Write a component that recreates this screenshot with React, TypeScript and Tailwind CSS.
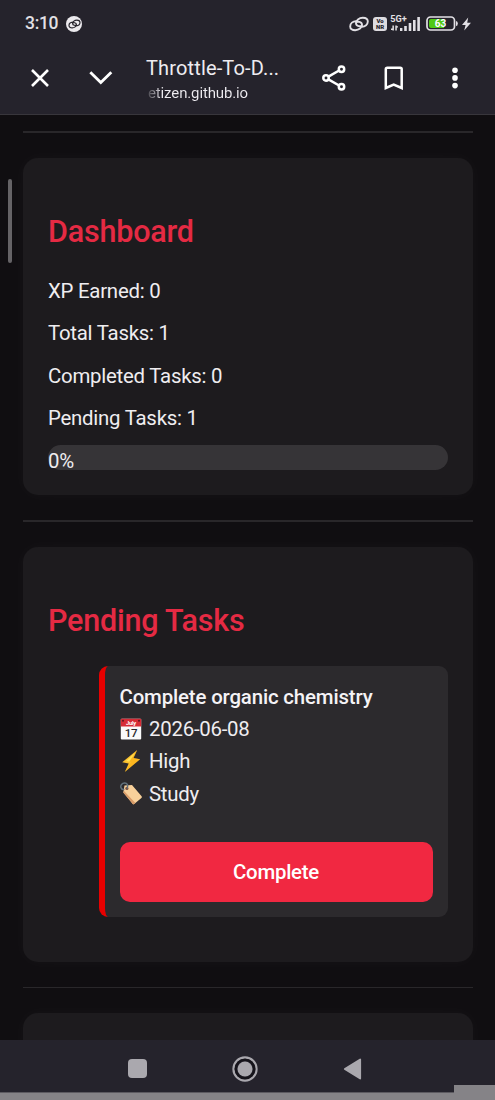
import type { ReactNode } from "react";

const stats = [
  { label: "XP Earned", value: 0 },
  { label: "Total Tasks", value: 1 },
  { label: "Completed Tasks", value: 0 },
  { label: "Pending Tasks", value: 1 }
];

const progress = 0;

function LinkRings({ className }: { className: string }) {
  return (
    <svg viewBox="0 0 20 16" className={className} fill="none" stroke="currentColor" strokeWidth="1.9">
      <path d="M13.6 9.6C11.6 10.8 7.2 10.4 7 7.4C6.8 4.2 10.2 1.8 13.8 1.8C16.8 1.8 18.8 3.2 18.8 5.6C18.8 8.4 16.2 10.6 12.8 10.9" />
      <path d="M6.4 6.4C8.4 5.2 12.8 5.6 13 8.6C13.2 11.8 9.8 14.2 6.2 14.2C3.2 14.2 1.2 12.8 1.2 10.4C1.2 7.6 3.8 5.4 7.2 5.1" />
    </svg>
  );
}

function StatusBar() {
  return (
    <div className="flex h-[46px] items-center pl-[25px] pr-[24px] pt-[1px] text-[#e2e0e5]">
      <span className="w-[34px] whitespace-nowrap text-[17.5px] font-medium leading-none tracking-[-0.3px]">3:10</span>
      <span className="ml-[7px] flex size-4 items-center justify-center rounded-full bg-[#eceaee] text-[#25232b]">
        <LinkRings className="h-[10px] w-[13px]" />
      </span>
      <span className="flex-1" />
      <LinkRings className="h-4 w-5" />
      <span className="ml-[4px] flex h-[14px] w-[14px] flex-col items-center justify-center rounded-[3px] bg-[#dddbe0] text-[6px] font-black leading-[6px] text-[#25232b]">
        <span>Vo</span>
        <span>NR</span>
      </span>
      <svg viewBox="0 0 31 19" className="-mt-[2px] ml-[3px] h-[19px] w-[31px] overflow-visible" fill="currentColor">
        <text x="0.2" y="9.4" fontSize="9" fontWeight="700" textLength="16.5" lengthAdjust="spacingAndGlyphs" fontFamily="Roboto">5G+</text>
        <path d="M2.4 12.5h1.5v5H2.4zM1 15.6h2v1.3H1zM5.3 12.5h1.5v5H5.3zM6 13.2h2v1.3H6z" />
        <rect x="10" y="15" width="2.4" height="3" />
        <rect x="14.2" y="13" width="2.6" height="5" />
        <rect x="18.7" y="10" width="2.6" height="8" />
        <rect x="23" y="7" width="2.6" height="11" />
        <rect x="27.3" y="4" width="2.6" height="14" />
      </svg>
      <svg viewBox="0 0 32 15" className="ml-[5px] h-[15px] w-8">
        <rect x="1" y="1" width="27.5" height="13" rx="3.5" fill="none" stroke="currentColor" strokeWidth="1.7" />
        <path d="M5 3h13v9H5a2 2 0 0 1-2-2V5a2 2 0 0 1 2-2Z" fill="#4fc914" />
        <path d="M30 5q1.8 0 1.8 2.5T30 10Z" fill="currentColor" />
        <text x="14.5" y="11.2" fontSize="10" fontWeight="700" textAnchor="middle" fill="#fff" fontFamily="Roboto">63</text>
      </svg>
      <svg viewBox="0 0 9 14" className="ml-[4px] h-[14px] w-[9px]" fill="currentColor">
        <path d="M6.2.4 0 8h3.6L2.2 13.6 9 5.8H5.2Z" />
      </svg>
    </div>
  );
}

function BrowserBar() {
  return (
    <div className="flex h-[68px] items-center pl-[31px] pr-[36px] pb-[4px] text-white">
      <svg viewBox="0 0 18 18" className="size-[18px]" fill="none" stroke="currentColor" strokeWidth="2.6">
        <path d="m1 1 16 16M17 1 1 17" />
      </svg>
      <svg viewBox="0 0 24 14" className="ml-[40px] h-[14px] w-6" fill="none" stroke="currentColor" strokeWidth="2.8">
        <path d="m1.3 1.2 10.5 10.4L22.3 1.2" />
      </svg>
      <div className="ml-[33px] w-[134px] whitespace-nowrap pt-[3px]">
        <div className="text-[20px] leading-[26px] tracking-[0.15px] text-[#eeecf1]">Throttle-To-D...</div>
        <div className="bg-linear-to-r from-[#35333b] to-[#eeecf1] to-[16px] bg-clip-text pl-[2px] text-[15px] leading-[24px] tracking-[-0.13px] text-transparent">
          etizen.github.io
        </div>
      </div>
      <svg viewBox="0 0 24 26" className="ml-[42px] h-[26px] w-6" fill="none" stroke="currentColor" strokeWidth="2.5">
        <circle cx="4" cy="13" r="2.7" />
        <circle cx="19.5" cy="4.2" r="2.7" />
        <circle cx="19.5" cy="21.8" r="2.7" />
        <path d="m6.4 11.7 10.7-6.2M6.4 14.3l10.7 6.2" />
      </svg>
      <svg viewBox="0 0 20 24" className="ml-[38px] h-6 w-5" fill="none" stroke="currentColor" strokeWidth="2.5">
        <path d="M1.8 22V3.2q0-1.5 1.5-1.5h12.9q1.5 0 1.5 1.5V22l-8-3.5Z" />
      </svg>
      <svg viewBox="0 0 6 22" className="ml-[47.5px] h-[22px] w-[6px]" fill="currentColor">
        <circle cx="3" cy="3.2" r="2.8" />
        <circle cx="3" cy="10.9" r="2.8" />
        <circle cx="3" cy="18.6" r="2.8" />
      </svg>
    </div>
  );
}

function Card({ title, className, children }: { title?: string; className: string; children?: ReactNode }) {
  return (
    <section
      className={`rounded-[15px] bg-[#1d1b1e] px-[25px] shadow-[0_0_15px_rgba(255,255,255,0.03)] ${className}`}
    >
      {title && (
        <h2 className="pt-[56px] text-[30.5px] font-medium leading-[36px] tracking-[-0.2px] text-[#e52a43]">{title}</h2>
      )}
      {children}
    </section>
  );
}

function Divider() {
  return <div className="my-[25px] h-[1.5px] shrink-0 bg-[#29272a]" />;
}

function CalendarIcon() {
  return (
    <svg viewBox="0 0 22 22" className="size-[22px]">
      <rect x=".8" y=".8" width="20.4" height="20.6" rx="1" fill="#fafafa" />
      <path d="M.8 1.5q0-.7.7-.7h19q.7 0 .7.7v7H.8Z" fill="#d72c36" />
      <circle cx="3" cy="2.8" r="1" fill="#5d1820" />
      <circle cx="19" cy="2.8" r="1" fill="#5d1820" />
      <text x="11" y="6.6" fontSize="5.8" fontWeight="700" textAnchor="middle" fill="#fff" fontFamily="Roboto">July</text>
      <text x="11" y="18.8" fontSize="11.5" fontWeight="500" textAnchor="middle" fill="#29292d" fontFamily="Roboto">17</text>
    </svg>
  );
}

function BoltIcon() {
  return (
    <svg viewBox="0 0 22 24" className="h-6 w-[22px]">
      <path d="M17.2 1 2.2 13.2l6.5 1.2L4.8 23l15.3-12.8-6.6-1.3Z" fill="#fbc02d" />
      <path d="m17.2 1-9.4 11.3 3.4.8L4.8 23l15.3-12.8-6.6-1.3Z" fill="#ffa000" opacity=".3" />
      <path d="M15.4 3.5 6 12l3.2.7Z" fill="#fff06a" opacity=".7" />
    </svg>
  );
}

function TagIcon() {
  return (
    <svg viewBox="0 0 22 24" className="h-6 w-[22px]">
      <path d="M4.5 3.4 12 3l9.6 11.3q.7.9-.2 1.6l-7.2 6q-.9.7-1.6-.2L3.3 10.4Z" fill="#f8d09a" />
      <path d="m3.3 10.4 9.3 11.3q.7.9 1.6.2l1.2-1L4 9Z" fill="#d99b68" />
      <circle cx="6.9" cy="6.4" r="1.6" fill="#7c5140" />
      <path d="M7 6.4C8.6 3 7 .9 4.6 1 1.9 1.1.3 3.3.9 5.5 1.4 7.2 3 7.7 4.4 7.3" fill="none" stroke="#62727d" strokeWidth="1.4" />
    </svg>
  );
}

function TaskRow({ icon, text }: { icon: ReactNode; text: string }) {
  return (
    <div className="flex h-[32.4px] items-center gap-[7.5px]">
      {icon}
      <span>{text}</span>
    </div>
  );
}

function NavBar() {
  return (
    <footer className="relative h-[60px] shrink-0 bg-[#25232c]">
      <div className="flex h-[52px] items-center pl-[128px] pt-[5px]">
        <span className="size-[19px] rounded-[4px] bg-[#aaa8ae]" />
        <svg viewBox="0 0 28 28" className="ml-[84px] size-7">
          <circle cx="14" cy="14" r="11.6" fill="none" stroke="#aaa8ae" strokeWidth="2.1" />
          <circle cx="14" cy="14" r="9.2" fill="none" stroke="#15131a" strokeWidth="2.2" />
          <circle cx="14" cy="14" r="7.5" fill="#aaa8ae" />
        </svg>
        <svg viewBox="0 0 19 22" className="ml-[84px] h-[22px] w-[19px]">
          <path d="M17.2 1.5v19L1.8 11Z" fill="#aaa8ae" stroke="#aaa8ae" strokeWidth="1.8" strokeLinejoin="round" />
        </svg>
      </div>
      <div className="h-2 border-t border-[#5c5a60] bg-[#858387]" />
      <div className="absolute bottom-0 right-0 h-[15px] w-[41px] bg-[#858387]" />
    </footer>
  );
}

export default function App() {
  return (
    <div className="flex h-[1100px] w-[495px] flex-col overflow-hidden bg-[#100e11] font-[Roboto,'Liberation_Sans',sans-serif] text-[20.4px] tracking-[-0.24px] text-[#efedf0]">
      <header className="h-[115px] shrink-0 border-b border-[#38363c] bg-[#25232c] tracking-normal">
        <StatusBar />
        <BrowserBar />
      </header>

      <main className="relative flex min-h-0 flex-1 flex-col overflow-hidden pl-[23px] pr-[22.5px]">
        <div className="absolute left-[7.5px] top-[64px] h-[84px] w-[4.5px] rounded-full bg-[#656366]" />
        <div className="mb-[25px] mt-[16px] h-[1.5px] shrink-0 bg-[#29272a]" />

        <Card title="Dashboard" className="h-[337.5px] shrink-0">
          <div className="mt-[20.6px]">
            {stats.map((s) => (
              <p key={s.label} className="h-[42.3px] leading-[42.3px]">
                {s.label}: {s.value}
              </p>
            ))}
          </div>
          <div className="mt-[5.9px] h-[25px] rounded-full bg-[#363437]">
            <div className="h-full whitespace-nowrap leading-[32px]" style={{ width: `${progress}%` }}>
              {progress}%
            </div>
          </div>
        </Card>

        <Divider />

        <Card title="Pending Tasks" className="h-[415px] shrink-0">
          <div className="ml-[50.5px] mt-[27px] h-[251px] rounded-[9px] border-l-[6.5px] border-[#e80000] bg-[#2c2a2d] pl-[15px] pr-[15px] pt-[15px]">
            <div className="h-[32.4px] font-medium leading-[32.4px] tracking-[-0.15px] text-[#f5f3f6]">
              Complete organic chemistry
            </div>
            <TaskRow icon={<CalendarIcon />} text="2026-06-08" />
            <TaskRow icon={<BoltIcon />} text="High" />
            <TaskRow icon={<TagIcon />} text="Study" />
            <button className="mt-[31.5px] h-[60px] w-full rounded-[10px] bg-[#f12841] pt-[1px] font-medium text-white">
              Complete
            </button>
          </div>
        </Card>

        <Divider />

        <Card className="h-[120px] shrink-0" />
      </main>

      <NavBar />
    </div>
  );
}
